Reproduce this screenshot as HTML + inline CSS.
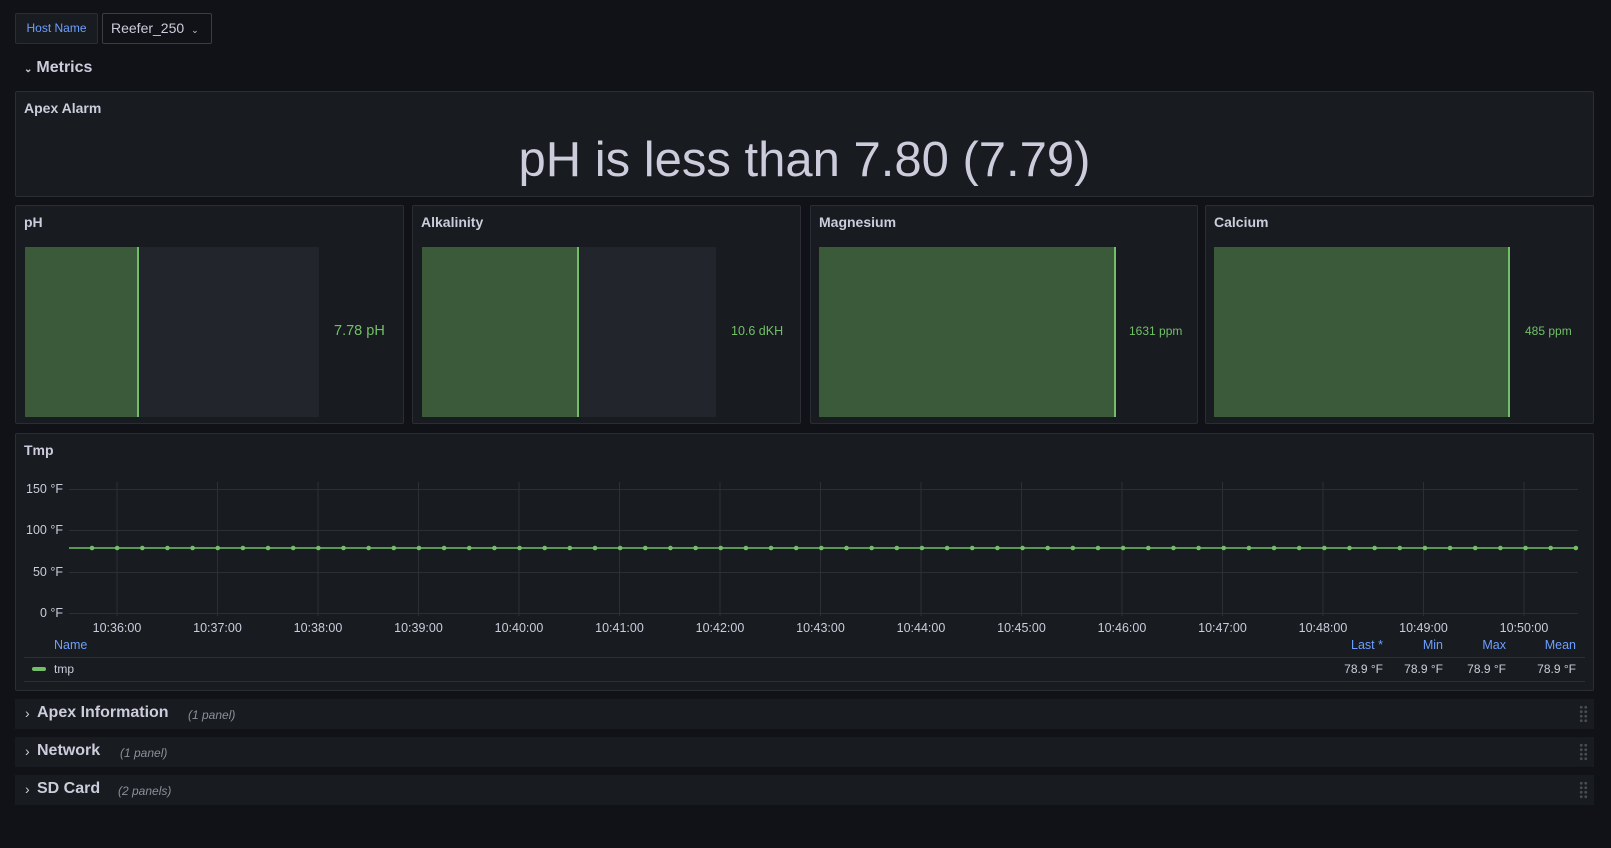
<!DOCTYPE html>
<html><head><meta charset="utf-8"><style>
*{box-sizing:border-box;margin:0;padding:0}
body{width:1611px;height:848px;background:#111217;font-family:"Liberation Sans",sans-serif;color:#ccccdc;position:relative;overflow:hidden}
.a{position:absolute}
.panel{position:absolute;background:#181b1f;border:1px solid #2a2d33;border-radius:2px}
.title{position:absolute;left:8px;top:8px;font-size:14px;font-weight:bold;color:#ccccdc}
.bar{position:absolute;background:#22252b}
.fill{position:absolute;left:0;top:0;bottom:0;background:#3b5a3a;border-right:2px solid #73bf69}
.val{position:absolute;color:#73bf69}
.row{position:absolute;left:15px;width:1579px;height:30px;background:#181b1f}
.row .t{position:absolute;left:22px;top:5px;font-size:16px;font-weight:bold;color:#ccccdc}
.row .c{position:absolute;left:10px;top:6px;font-size:14px;color:#ccccdc}
.row .n{position:absolute;top:9px;font-size:12px;font-style:italic;color:#8e8e9c}
.grip{position:absolute;right:6px;top:6px;width:9px;height:18px;background:radial-gradient(circle,#4a4c52 1.3px,transparent 1.6px) 0 0/4.5px 4.5px}
</style></head><body>
<div class="a" style="left:15px;top:13px;width:83px;height:31px;border:1px solid #2a2d33;background:#181b1f;border-radius:2px;color:#6e9fff;font-size:12px;line-height:29px;text-align:center">Host Name</div>
<div class="a" style="left:102px;top:13px;width:110px;height:31px;border:1px solid #3a3d44;border-radius:2px;font-size:14px;line-height:29px;padding-left:8px;color:#ccccdc">Reefer_250 <span style="font-size:9px;margin-left:3px">&#8964;</span></div>
<div class="a" style="left:24px;top:59px;font-size:16px;font-weight:bold;color:#ccccdc"><span style="font-size:10px;margin-right:4px">&#8964;</span>Metrics</div>

<div class="panel" style="left:15px;top:91px;width:1579px;height:106px">
<div class="title">Apex Alarm</div>
<div class="a" style="left:0;right:0;top:38px;text-align:center;font-size:49px;color:#ccccdc;line-height:60px">pH is less than 7.80 (7.79)</div>
</div>

<div class="panel" style="left:15px;top:205px;width:389px;height:219px">
<div class="title">pH</div>
<div class="bar" style="left:9px;top:41px;width:294px;height:170px"><div class="fill" style="width:114px"></div></div>
<div class="val" style="left:318px;top:117px;font-size:14.5px">7.78 pH</div>
</div>
<div class="panel" style="left:412px;top:205px;width:389px;height:219px">
<div class="title">Alkalinity</div>
<div class="bar" style="left:9px;top:41px;width:294px;height:170px"><div class="fill" style="width:157px"></div></div>
<div class="val" style="left:318px;top:118px;font-size:12.5px">10.6 dKH</div>
</div>
<div class="panel" style="left:810px;top:205px;width:388px;height:219px">
<div class="title">Magnesium</div>
<div class="bar" style="left:8px;top:41px;width:297px;height:170px"><div class="fill" style="width:297px"></div></div>
<div class="val" style="left:318px;top:118px;font-size:12px">1631 ppm</div>
</div>
<div class="panel" style="left:1205px;top:205px;width:389px;height:219px">
<div class="title">Calcium</div>
<div class="bar" style="left:8px;top:41px;width:296px;height:170px"><div class="fill" style="width:296px"></div></div>
<div class="val" style="left:319px;top:118px;font-size:12px">485 ppm</div>
</div>

<div class="panel" style="left:15px;top:433px;width:1579px;height:258px">
<div class="title">Tmp</div>
</div>
<svg class="a" style="left:0;top:0" width="1611" height="848">
<g font-family="Liberation Sans, sans-serif" font-size="12.5" fill="#ccccdc" text-anchor="end">
<text x="63" y="493">150 °F</text><text x="63" y="534">100 °F</text><text x="63" y="576">50 °F</text><text x="63" y="617">0 °F</text>
</g>
<g stroke="#2c2f35" stroke-width="1">
<line x1="69" y1="489.5" x2="1578" y2="489.5"/><line x1="69" y1="530.5" x2="1578" y2="530.5"/><line x1="69" y1="572.5" x2="1578" y2="572.5"/><line x1="69" y1="613.5" x2="1578" y2="613.5"/>
</g>
<g id="vl" stroke="#2c2f35"></g>
<g id="tl" font-family="Liberation Sans, sans-serif" font-size="12.5" fill="#ccccdc" text-anchor="middle"></g>
<line x1="69" y1="548" x2="1578" y2="548" stroke="#73bf69" stroke-width="1.5"/>
<g id="pts" fill="#73bf69"></g>
<g stroke="#2c2f35"><line x1="24" y1="657.5" x2="1585" y2="657.5"/><line x1="24" y1="681.5" x2="1585" y2="681.5"/></g>
<rect x="32" y="667" width="14" height="4" rx="2" fill="#73bf69"/>
<g font-family="Liberation Sans, sans-serif" font-size="12.5">
<text x="54" y="649" fill="#6e9fff">Name</text>
<g text-anchor="end" fill="#6e9fff"><text x="1383" y="649">Last *</text><text x="1443" y="649">Min</text><text x="1506" y="649">Max</text><text x="1576" y="649">Mean</text></g>
</g>
<g font-family="Liberation Sans, sans-serif" font-size="12" fill="#ccccdc">
<text x="54" y="673">tmp</text>
<g text-anchor="end"><text x="1383" y="673">78.9 °F</text><text x="1443" y="673">78.9 °F</text><text x="1506" y="673">78.9 °F</text><text x="1576" y="673">78.9 °F</text></g>
</g>
</svg>
<script>
var ns="http://www.w3.org/2000/svg";
var vl=document.getElementById('vl'),tl=document.getElementById('tl'),pts=document.getElementById('pts');
for(var k=0;k<15;k++){var x=117+100.5*k;
var l=document.createElementNS(ns,'line');l.setAttribute('x1',x);l.setAttribute('x2',x);l.setAttribute('y1',482);l.setAttribute('y2',616);vl.appendChild(l);
var t=document.createElementNS(ns,'text');t.setAttribute('x',x);t.setAttribute('y',632);t.textContent='10:'+(36+k)+':00';tl.appendChild(t);}
for(var i=0;i<60;i++){var c=document.createElementNS(ns,'circle');c.setAttribute('cx',92+i*25.15);c.setAttribute('cy',548);c.setAttribute('r',2.3);pts.appendChild(c);}
</script>

<div class="row" style="top:699px"><span class="c">›</span><span class="t">Apex Information</span><span class="n" style="left:173px">(1 panel)</span><div class="grip"></div></div>
<div class="row" style="top:737px"><span class="c">›</span><span class="t">Network</span><span class="n" style="left:105px">(1 panel)</span><div class="grip"></div></div>
<div class="row" style="top:775px"><span class="c">›</span><span class="t">SD Card</span><span class="n" style="left:103px">(2 panels)</span><div class="grip"></div></div>
</body></html>
